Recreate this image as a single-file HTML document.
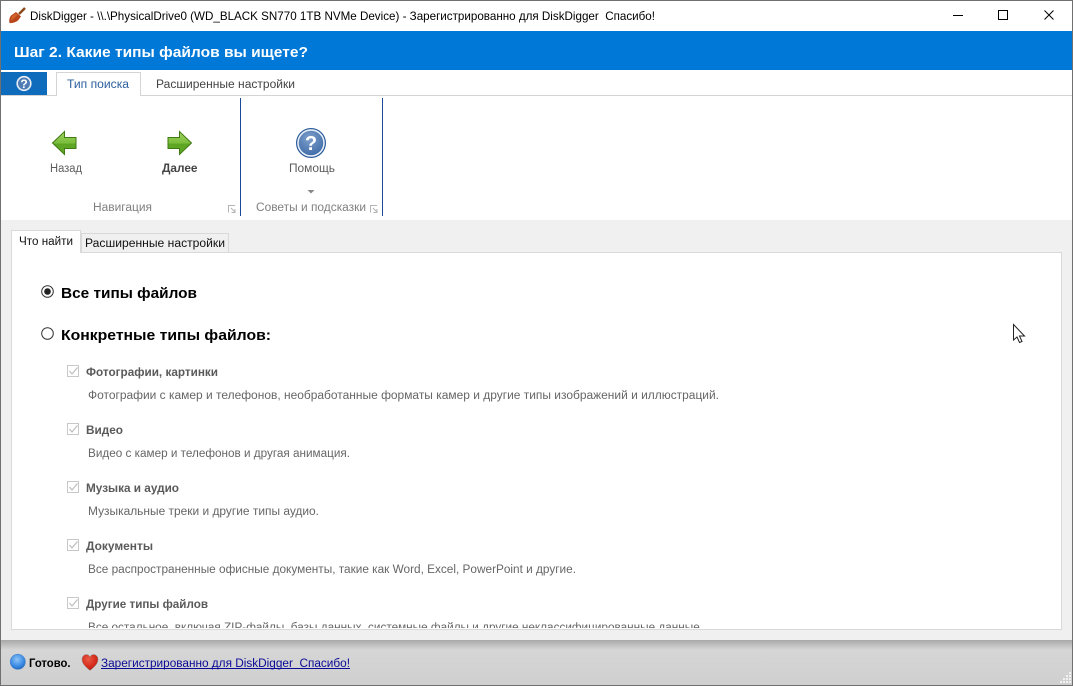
<!DOCTYPE html>
<html lang="ru"><head><meta charset="utf-8"><title>DiskDigger</title>
<style>
html,body{margin:0;padding:0;background:#fff;width:1073px;height:686px;overflow:hidden}
svg{display:block;position:absolute;left:0;top:0}
text{font-family:"Liberation Sans","DejaVu Sans",sans-serif;white-space:pre}
.b{font-weight:bold}
.d{font-size:11.5px;fill:#666}
.h{font-size:11.5px;font-weight:bold;fill:#5a5a5a}
.m{font-size:15px;font-weight:bold;fill:#000}
.r{font-size:11.5px;fill:#5c5c5c}
</style></head><body>
<svg width="1073" height="686" viewBox="0 0 1073 686" xmlns="http://www.w3.org/2000/svg">
<defs>
<linearGradient id="st" x1="0" y1="0" x2="0" y2="1"><stop offset="0" stop-color="#a8a8a8"/><stop offset=".22" stop-color="#d6d6d6"/><stop offset="1" stop-color="#cfcfcf"/></linearGradient>
<linearGradient id="ga" x1="0" y1="0" x2="0" y2="1"><stop offset="0" stop-color="#9ed25e"/><stop offset=".5" stop-color="#7bbd3c"/><stop offset=".55" stop-color="#5ea524"/><stop offset="1" stop-color="#62a828"/></linearGradient>
<radialGradient id="q" cx=".45" cy=".35" r=".75"><stop offset="0" stop-color="#7fa0cc"/><stop offset="1" stop-color="#30609f"/></radialGradient>
<radialGradient id="ball" cx=".45" cy=".35" r=".7"><stop offset="0" stop-color="#8fc4f5"/><stop offset=".6" stop-color="#3f8fe6"/><stop offset="1" stop-color="#1b5fb8"/></radialGradient>
<radialGradient id="heart" cx=".4" cy=".3" r=".8"><stop offset="0" stop-color="#e85a44"/><stop offset=".6" stop-color="#d42a1a"/><stop offset="1" stop-color="#9c130e"/></radialGradient>
<clipPath id="panel"><rect x="12" y="253" width="1050" height="375"/></clipPath>
</defs>

<rect width="1073" height="686" fill="#fff"/>
<!-- header -->
<rect x="0" y="31" width="1073" height="39" fill="#0078d7"/>
<text x="30" y="20" font-size="12" fill="#000" textLength="625" lengthAdjust="spacingAndGlyphs">DiskDigger - \\.\PhysicalDrive0 (WD_BLACK SN770 1TB NVMe Device) - Зарегистрированно для DiskDigger  Спасибо!</text>
<text x="14" y="57" font-size="15" class="b" fill="#fff" textLength="294" lengthAdjust="spacingAndGlyphs">Шаг 2. Какие типы файлов вы ищете?</text>
<!-- shovel -->
<path d="M19 14 L25 8" stroke="#8a4a1c" stroke-width="2.500" fill="none"/>
<path d="M16 12 L21 16.500 L18 20.500 Q14 23.500 9.500 23 Q8.500 19 11 15.500 Z" fill="#b8451c"/>
<path d="M11 20.500 Q11 17 13 15 L16 13.500 L17.500 15 L14 18.500 Z" fill="#d8692f" opacity=".8"/>
<!-- window controls -->
<rect x="953" y="15" width="10" height="1" fill="#000"/>
<rect x="998.500" y="10.500" width="9" height="9" fill="none" stroke="#000"/>
<path d="M1044.500 10.500 L1053.500 19.500 M1053.500 10.500 L1044.500 19.500" stroke="#000" stroke-width="1" fill="none"/>

<!-- ribbon tabs -->
<rect x="0" y="95" width="1073" height="1" fill="#d4d4d4"/>
<rect x="1" y="72" width="46" height="23" fill="#0f6cbd"/>
<circle cx="24" cy="83.500" r="6.800" fill="#4f7cb5" stroke="#e8eef6" stroke-width="1.600"/>
<text x="24" y="87.800" font-size="12" class="b" fill="#fff" text-anchor="middle">?</text>
<path d="M56.500 96 V72.500 H140.500 V96" fill="#fff" stroke="#d4d4d4"/>
<rect x="57" y="95" width="83" height="2" fill="#fff"/>
<text x="67" y="88" font-size="11.500" fill="#2b5f9e" textLength="62" lengthAdjust="spacingAndGlyphs">Тип поиска</text>
<text x="156" y="88" font-size="11.500" fill="#444" textLength="139" lengthAdjust="spacingAndGlyphs">Расширенные настройки</text>

<!-- ribbon -->
<rect x="240" y="98" width="1" height="118" fill="#1b4a98"/>
<rect x="382" y="98" width="1" height="118" fill="#1b4a98"/>
<path d="M52.500 143 L64.500 131.500 V137.500 H76 V148.500 H64.500 V154.500 Z" fill="url(#ga)" stroke="#3f7a12"/>
<path d="M168 137.500 H179.500 V131.500 L191.500 143 L179.500 154.500 V148.500 H168 Z" fill="url(#ga)" stroke="#3f7a12"/>
<text x="50" y="172" class="r" textLength="32" lengthAdjust="spacingAndGlyphs">Назад</text>
<text x="162" y="172" font-size="11.500" class="b" fill="#444" textLength="35.500" lengthAdjust="spacingAndGlyphs">Далее</text>
<circle cx="311" cy="143" r="14.500" fill="url(#q)" stroke="#2b5c9c" stroke-width="1"/>
<circle cx="311" cy="143" r="13" fill="none" stroke="#eaf0f8" stroke-width="1.500"/>
<text x="311" y="150" font-size="20" class="b" fill="#fff" text-anchor="middle">?</text>
<text x="289" y="172" class="r" textLength="46" lengthAdjust="spacingAndGlyphs">Помощь</text>
<path d="M307.500 190 H314.500 L311 193.500 Z" fill="#888"/>
<text x="93" y="211" font-size="11.500" fill="#808080" textLength="59" lengthAdjust="spacingAndGlyphs">Навигация</text>
<text x="256" y="211" font-size="11.500" fill="#808080" textLength="110" lengthAdjust="spacingAndGlyphs">Советы и подсказки</text>
<path d="M228.500 212.500 V205.500 H235 M231 208 L235 212 M235 209 V212.500 H231.500" fill="none" stroke="#b4b4b4"/>
<path d="M370.500 212.500 V205.500 H377 M373 208 L377 212 M377 209 V212.500 H373.500" fill="none" stroke="#b4b4b4"/>

<!-- content background -->
<rect x="0" y="220" width="1073" height="420" fill="#f0f0f0"/>
<rect x="11.500" y="252.500" width="1050" height="377" fill="#fff" stroke="#d9d9d9"/>
<rect x="81.500" y="233.500" width="147" height="19" fill="#f0f0f0" stroke="#d9d9d9"/>
<path d="M11.500 253 V230.500 H80.500 V253" fill="#fff" stroke="#d9d9d9"/>
<rect x="12" y="251" width="68" height="3" fill="#fff"/>
<text x="19" y="245" font-size="11.500" fill="#111" textLength="54" lengthAdjust="spacingAndGlyphs">Что найти</text>
<text x="85" y="247" font-size="11.500" fill="#111" textLength="140" lengthAdjust="spacingAndGlyphs">Расширенные настройки</text>

<!-- radios -->
<circle cx="47.500" cy="291.500" r="5.800" fill="#fff" stroke="#333"/>
<circle cx="47.500" cy="291.500" r="3.300" fill="#222"/>
<text x="61" y="298" class="m" textLength="136" lengthAdjust="spacingAndGlyphs">Все типы файлов</text>
<circle cx="47.500" cy="333.500" r="5.800" fill="#fff" stroke="#333"/>
<text x="61" y="340" class="m" textLength="210" lengthAdjust="spacingAndGlyphs">Конкретные типы файлов:</text>

<!-- checkboxes -->
<g fill="#fff" stroke="#c8c8c8"><rect x="67.500" y="365.500" width="11" height="11"/><rect x="67.500" y="423.500" width="11" height="11"/><rect x="67.500" y="481.500" width="11" height="11"/><rect x="67.500" y="539.500" width="11" height="11"/><rect x="67.500" y="597.500" width="11" height="11"/></g>
<g fill="none" stroke="#bdbdbd" stroke-width="1.200"><path d="M69.500 371 L72 374 L77.500 367.500"/><path d="M69.500 429 L72 432 L77.500 425.500"/><path d="M69.500 487 L72 490 L77.500 483.500"/><path d="M69.500 545 L72 548 L77.500 541.500"/><path d="M69.500 603 L72 606 L77.500 599.500"/></g>

<text x="86" y="376" class="h" textLength="132" lengthAdjust="spacingAndGlyphs">Фотографии, картинки</text>
<text x="88" y="399" class="d" textLength="631" lengthAdjust="spacingAndGlyphs">Фотографии с камер и телефонов, необработанные форматы камер и другие типы изображений и иллюстраций.</text>
<text x="86" y="434" class="h" textLength="37" lengthAdjust="spacingAndGlyphs">Видео</text>
<text x="88" y="457" class="d" textLength="262" lengthAdjust="spacingAndGlyphs">Видео с камер и телефонов и другая анимация.</text>
<text x="86" y="492" class="h" textLength="93" lengthAdjust="spacingAndGlyphs">Музыка и аудио</text>
<text x="88" y="515" class="d" textLength="231" lengthAdjust="spacingAndGlyphs">Музыкальные треки и другие типы аудио.</text>
<text x="86" y="550" class="h" textLength="67" lengthAdjust="spacingAndGlyphs">Документы</text>
<text x="88" y="573" class="d" textLength="488" lengthAdjust="spacingAndGlyphs">Все распространенные офисные документы, такие как Word, Excel, PowerPoint и другие.</text>
<text x="86" y="608" class="h" textLength="122" lengthAdjust="spacingAndGlyphs">Другие типы файлов</text>
<g clip-path="url(#panel)"><text x="88" y="631" class="d" textLength="615" lengthAdjust="spacingAndGlyphs">Все остальное, включая ZIP-файлы, базы данных, системные файлы и другие неклассифицированные данные.</text></g>

<!-- cursor -->
<path d="M1013.500 324.500 V340 L1017 337 L1019.500 342.500 L1022 341.500 L1019.500 336 L1024.500 336 Z" fill="#fff" stroke="#222"/>

<!-- status -->
<rect x="0" y="640" width="1073" height="45" fill="url(#st)"/>
<circle cx="17.800" cy="661.800" r="7.600" fill="url(#ball)" stroke="#4f87c8" stroke-width=".6"/>
<text x="29" y="667" font-size="11.500" class="b" fill="#000" textLength="41.500" lengthAdjust="spacingAndGlyphs">Готово.</text>
<path d="M90 670.500 C86 667 82 664 82 659.500 C82 656 84.500 654.500 86.500 654.500 C88 654.500 89.500 655.500 90 657 C90.500 655.500 92 654.500 93.500 654.500 C95.500 654.500 98 656 98 659.500 C98 664 94 667 90 670.500 Z" fill="url(#heart)" stroke="#8e8e8e" stroke-width=".5"/>
<text x="101" y="667" font-size="11.500" fill="#0a0a96" textLength="249" lengthAdjust="spacingAndGlyphs">Зарегистрированно для DiskDigger  Спасибо!</text>
<rect x="101" y="668" width="249" height="1" fill="#0a0a96"/>
<g fill="#f2f2f2"><rect x="1069" y="672" width="2" height="2"/><rect x="1066" y="675" width="2" height="2"/><rect x="1069" y="675" width="2" height="2"/><rect x="1063" y="678" width="2" height="2"/><rect x="1066" y="678" width="2" height="2"/><rect x="1069" y="678" width="2" height="2"/><rect x="1060" y="681" width="2" height="2"/><rect x="1063" y="681" width="2" height="2"/><rect x="1066" y="681" width="2" height="2"/><rect x="1069" y="681" width="2" height="2"/></g>

<!-- window border -->
<rect x="0" y="0" width="1073" height="1" fill="#707070"/>
<rect x="0" y="0" width="1" height="686" fill="#707070"/>
<rect x="1072" y="0" width="1" height="686" fill="#707070"/>
<rect x="0" y="685" width="1073" height="1" fill="#707070"/>
</svg>
</body></html>
